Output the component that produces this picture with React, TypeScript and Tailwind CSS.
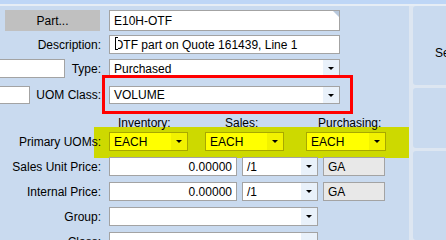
import React from "react";

const font = { fontFamily: '"Liberation Sans", Arial, sans-serif' };

function Arrow() {
  return (
    <div className="w-0 h-0 border-l-[3px] border-r-[3px] border-t-[3px] border-l-transparent border-r-transparent border-t-black" />
  );
}

function TextBox({
  w,
  children,
  right,
  gray,
}: {
  w: string;
  children?: React.ReactNode;
  right?: boolean;
  gray?: boolean;
}) {
  return (
    <div
      className={`${w} h-full border border-[#a3a3a3] ${gray ? "bg-[#e8e8e8]" : "bg-white"} flex items-center ${right ? "justify-end pr-[4px]" : "pl-[4px]"} text-[12px] text-black overflow-hidden whitespace-nowrap relative`}
    >
      {children}
    </div>
  );
}

function Combo({
  w,
  value,
  yellow,
}: {
  w: string;
  value?: string;
  yellow?: boolean;
}) {
  return (
    <div
      className={`${w} h-full border ${yellow ? "border-[#a8a800] bg-[#ffff00]" : "border-[#a3a3a3] bg-white"} flex items-stretch text-[12px] text-black`}
    >
      <div className="flex-1 flex items-center pl-[4px] overflow-hidden whitespace-nowrap">{value}</div>
      <div className={`w-[16px] flex items-center justify-center ${yellow ? "bg-[#f2f200]" : "bg-[#e9f1fa]"}`}>
        <Arrow />
      </div>
    </div>
  );
}

function Label({ children, pre }: { children: React.ReactNode; pre?: React.ReactNode }) {
  return (
    <div className="w-[109px] h-full flex items-center shrink-0">
      {pre}
      <div className="flex-1 text-right pr-[8px] text-[12px] text-black whitespace-nowrap">{children}</div>
    </div>
  );
}

export default function App() {
  return (
    <div className="relative w-[446px] h-[240px] overflow-hidden bg-[#c9daef]" style={font}>
      <div className="h-[4px] bg-[#bed6f6]" />
      <div className="h-[2px] bg-[#e6edf5]" />
      <div className="flex h-[234px]">
        {/* form */}
        <div className="relative w-[409px] shrink-0">
          <div className="absolute left-[94px] top-[121px] w-[315px] h-[31px] bg-[#cdd900]" />
          <div className="relative flex flex-col">
            {/* Part */}
            <div className="flex h-[21px] mt-[4px]">
              <div className="ml-[5px] w-[95px] h-full bg-[#c0c0c0] flex items-center justify-center text-[12px] text-black">
                Part...
              </div>
              <div className="w-[9px]" />
              <TextBox w="w-[231px]">
                E10H-OTF
                <div className="absolute top-0 right-0 w-0 h-0 border-t-[6px] border-l-[6px] border-t-[#b8c8dc] border-l-transparent" />
              </TextBox>
            </div>
            {/* Description */}
            <div className="flex h-[19px] mt-[4px]">
              <Label>Description:</Label>
              <TextBox w="w-[231px]">
                <span className="relative">
                  OTF part on Quote 161439, Line 1
                  <span className="absolute left-[-1px] top-[1px] w-[5px] h-[13px] bg-white" />
                  <span className="absolute left-[1px] top-[1px] w-px h-[13px] bg-black" />
                  <span className="absolute left-[1px] top-[1px] w-[3px] h-px bg-black" />
                  <span className="absolute left-[1px] top-[13px] w-[3px] h-px bg-black" />
                </span>
              </TextBox>
            </div>
            {/* Type */}
            <div className="flex h-[19px] mt-[5px]">
              <Label pre={<div className="w-[65px] h-full bg-white border border-[#a3a3a3] border-l-0" />}>Type:</Label>
              <Combo w="w-[231px]" value="Purchased" />
            </div>
            {/* UOM Class */}
            <div className="flex h-[18px] mt-[8px]">
              <Label pre={<div className="w-[30px] h-full bg-white border border-[#a3a3a3] border-l-0" />}>UOM Class:</Label>
              <Combo w="w-[231px]" value="VOLUME" />
            </div>
            {/* headers */}
            <div className="flex h-[14px] mt-[10px] text-[12px] text-black">
              <div className="w-[118px]" />
              <div className="w-[107px]">Inventory:</div>
              <div className="w-[93px]">Sales:</div>
              <div>Purchasing:</div>
            </div>
            {/* Primary UOMs */}
            <div className="flex h-[19px] mt-[4px]">
              <Label>Primary UOMs:</Label>
              <Combo w="w-[79px]" value="EACH" yellow />
              <div className="w-[17px]" />
              <Combo w="w-[79px]" value="EACH" yellow />
              <div className="w-[22px]" />
              <Combo w="w-[80px]" value="EACH" yellow />
            </div>
            {/* Sales Unit Price */}
            <div className="flex h-[19px] mt-[6px]">
              <Label>Sales Unit Price:</Label>
              <TextBox w="w-[128px]" right>0.00000</TextBox>
              <div className="w-[5px]" />
              <Combo w="w-[76px]" value="/1" />
              <div className="w-[5px]" />
              <TextBox w="w-[62px]" gray>GA</TextBox>
            </div>
            {/* Internal Price */}
            <div className="flex h-[19px] mt-[6px]">
              <Label>Internal Price:</Label>
              <TextBox w="w-[128px]" right>0.00000</TextBox>
              <div className="w-[5px]" />
              <Combo w="w-[76px]" value="/1" />
              <div className="w-[5px]" />
              <TextBox w="w-[62px]" gray>GA</TextBox>
            </div>
            {/* Group */}
            <div className="flex h-[19px] mt-[6px]">
              <Label>Group:</Label>
              <Combo w="w-[209px]" />
            </div>
            {/* Class */}
            <div className="flex h-[19px] mt-[6px]">
              <Label>Class:</Label>
              <Combo w="w-[209px]" />
            </div>
          </div>
        </div>
        {/* separator */}
        <div className="w-[4px] bg-[#dde6f1] shrink-0" />
        {/* right panel */}
        <div className="flex-1 flex flex-col gap-[3px] bg-[#dde6f1]">
          <div className="h-[79px] bg-[#c9daef] rounded-[3px] pl-[22px] pt-[38px] text-[12px] text-black whitespace-nowrap">
            Se
          </div>
          <div className="h-[60px] bg-[#c9daef] rounded-[3px]" />
          <div className="flex-1 bg-[#c9daef] rounded-[3px]" />
        </div>
      </div>
      {/* red annotation */}
      <div className="absolute left-[102px] top-[75px] w-[251px] h-[39px] border-[3px] border-[#ff0000]" />
    </div>
  );
}
